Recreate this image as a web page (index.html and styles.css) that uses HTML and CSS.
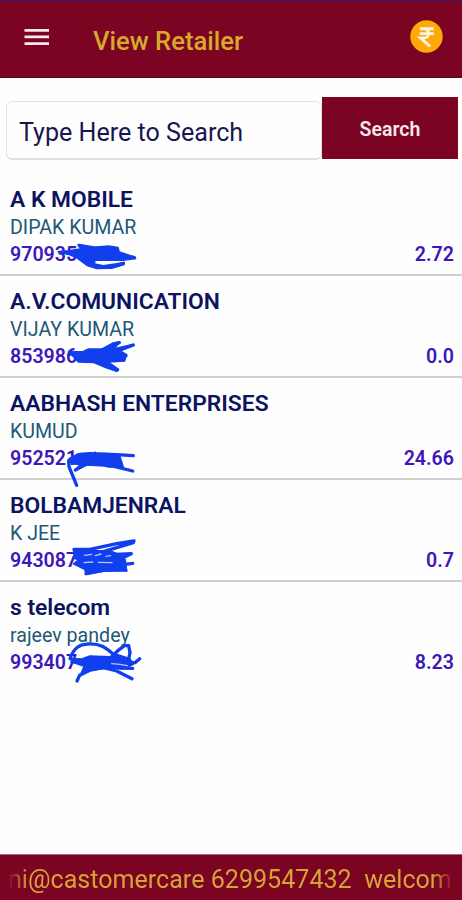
FILE: index.html
```html
<!DOCTYPE html>
<html lang="en">
<head>
    <meta charset="UTF-8">
    <meta name="viewport" content="width=device-width, initial-scale=1.0">
    <title>View Retailer</title>
    <link rel="stylesheet" href="styles.css">
</head>
<body>

<header class="topbar">
    <svg class="menu" viewBox="0 0 26 18" width="26" height="18">
        <path d="M0.5 2.3H25M0.5 8.8H25M0.5 15.6H25" stroke="#f6e9ee" stroke-width="2.8"/>
    </svg>
    <h1 class="title">View Retailer</h1>
    <svg class="coin" viewBox="0 0 34 34" width="33" height="33">
        <circle cx="17" cy="17" r="16.7" fill="#ffa908"/>
        <path d="M10 9H24.5M10 14H24.5M10 9H14C21 9 21 18.6 14 18.6H10.8L20.7 27.2" fill="none" stroke="#fff6df" stroke-width="3"/>
    </svg>
</header>

<div class="search">
    <input class="search-input" type="text" placeholder="Type Here to Search">
    <button class="search-button">Search</button>
</div>

<main class="list">
    <div class="row">
        <div class="shop">A K MOBILE</div>
        <div class="owner">DIPAK KUMAR</div>
        <div class="line"><span>970935</span><span>2.72</span></div>
        <svg class="scribble" viewBox="0 -18 720 306">
            <path class="fill" d="M174 215L205 212L242 207L234 194L275 202L325 198L354 202L358 216L404 231L407 236L370 241L285 241L284 252L310 257L345 252L373 247L372 254L335 265L290 266L262 257L230 233L200 221Z"/>
            <path d="M180 217L230 222L260 250L300 262L340 259L370 250M238 196L290 205L350 222L403 233"/>
        </svg>
    </div>
    <div class="row">
        <div class="shop">A.V.COMUNICATION</div>
        <div class="owner">VIJAY KUMAR</div>
        <div class="line"><span>853986</span><span>0.0</span></div>
        <svg class="scribble" viewBox="0 -12 720 306">
            <path class="fill" d="M206 215L250 214L264 207L306 207L340 189L360 187L342 206L398 193L401 197L362 213L380 224L374 243L325 246L356 268L350 274L315 262L282 248L235 246Z"/>
            <path d="M209 218L240 236L300 248L352 270M300 214L340 192L358 188M315 225L365 207L400 195M320 225L378 227M318 240L370 240"/>
        </svg>
    </div>
    <div class="row">
        <div class="shop">AABHASH ENTERPRISES</div>
        <div class="owner">KUMUD</div>
        <div class="line"><span>952521</span><span>24.66</span></div>
        <svg class="scribble" viewBox="0 -18 720 306">
            <path class="fill" d="M207 224L235 209L320 208L360 217L370 249L325 249L290 238L253 242L226 258L240 241L214 240Z"/>
            <path d="M230 304L207 248L206 230L240 211L270 209L350 212L400 215M214 226L250 220L285 208M226 258L260 240L330 244L398 261"/>
        </svg>
    </div>
    <div class="row">
        <div class="shop">BOLBAMJENRAL</div>
        <div class="owner">K JEE</div>
        <div class="line"><span>943087</span><span>0.7</span></div>
        <svg class="scribble" viewBox="0 -24 720 306">
            <path class="fill" d="M220 184L250 188L330 188L365 203L376 215L380 248L320 248L258 260L254 244L220 228L234 216L222 206Z"/>
            <path d="M222 184L270 184L350 167L402 159L400 164L310 191L345 199L394 197L360 213L350 232L398 226M222 208L280 225L378 247M258 257L310 247L370 246"/>
            <path class="gap" d="M254 202L275 199M286 203L303 198M318 205L332 203M252 224L278 222M295 223L336 224"/>
        </svg>
    </div>
    <div class="row">
        <div class="shop">s telecom</div>
        <div class="owner">rajeev pandey</div>
        <div class="line"><span>993407</span><span>8.23</span></div>
        <svg class="scribble" viewBox="0 -18 720 306">
            <path class="fill" d="M211 211L245 213L270 204L330 206L345 197L390 212L400 229L370 243L320 240L275 247L240 263L252 235L216 222Z"/>
            <path d="M210 212C222 178 240 169 262 168C302 165 320 181 339 198C355 220 375 226 405 224L419 212M325 219L351 190L373 173L386 173L390 194L385 218M216 222L250 218L310 215M231 279L239 262L270 246L310 239L350 249L396 272M320 233L365 240L398 241"/>
            <path class="gap" d="M335 227L360 229L382 233"/>
        </svg>
    </div>
</main>

<footer class="ticker">
    <div class="ticker-text">ni@castomercare 6299547432&nbsp; welcom</div>
</footer>

</body>
</html>
```
FILE: styles.css
```css
body {
    margin: 0;
    height: 900px;
    display: flex;
    flex-direction: column;
    overflow: hidden;
    background-color: #fefefe;
    font-family: Roboto, sans-serif;
}
.topbar {
    box-sizing: border-box;
    height: 78px;
    display: flex;
    align-items: center;
    padding: 0 19px 6px 24px;
    background-color: #7b0423;
    border-top: 2px solid #5b0f4c;
    border-bottom: 1px solid #54051a;
}
.menu {
    margin-right: 43px;
}
.title {
    flex: 1;
    margin: 9px 0 0;
    font-size: 25.6px;
    font-weight: 500;
    line-height: 32px;
    color: #d5a92a;
}
.search {
    display: flex;
    align-items: flex-start;
    padding: 19px 4px 0 6px;
    height: 77px;
}
.search-input {
    box-sizing: border-box;
    flex: 1;
    min-width: 0;
    height: 59px;
    margin-top: 4px;
    padding: 4px 12px 0;
    border: 1px solid #e0e0e0;
    border-bottom-width: 2px;
    border-radius: 6px;
    background-color: #fefefe;
    font-family: Roboto, sans-serif;
    font-size: 25.1px;
}
.search-input::placeholder {
    color: #17174f;
}
.search-button {
    width: 136px;
    height: 62px;
    padding: 2px 0 0;
    border: none;
    background-color: #7b0423;
    color: #f8e8ee;
    font-family: Roboto, sans-serif;
    font-size: 19.5px;
    font-weight: 600;
}
.list {
    flex: 1;
}
.row {
    position: relative;
    box-sizing: border-box;
    height: 102px;
    padding: 11px 8px 0 10px;
    border-bottom: 2px solid #d0d0d0;
}
.row:last-child {
    border-bottom: none;
}
.shop {
    font-size: 22.8px;
    font-weight: 600;
    line-height: 30px;
    color: #0c1462;
}
.owner {
    font-size: 19.6px;
    line-height: 26px;
    color: #215877;
}
.line {
    display: flex;
    justify-content: space-between;
    font-size: 19.6px;
    font-weight: 600;
    line-height: 27px;
    color: #3d16bd;
}
.scribble {
    position: absolute;
    left: 0;
    top: 0;
    width: 240px;
    height: 102px;
    overflow: visible;
    z-index: 1;
}
.scribble path {
    fill: none;
    stroke: #123fee;
    stroke-width: 10;
    stroke-linecap: round;
    stroke-linejoin: round;
}
.scribble .fill {
    fill: #123fee;
    stroke-width: 4;
}
.scribble .gap {
    stroke: #b9c6f8;
    stroke-width: 4;
}
.ticker {
    box-sizing: border-box;
    height: 46px;
    padding: 9px 8px 0;
    border-top: 1px solid #b5647a;
    background-color: #7b0423;
}
.ticker-text {
    overflow: hidden;
    white-space: nowrap;
    font-size: 25.1px;
    line-height: 32px;
    color: #d5a436;
    -webkit-mask-image: linear-gradient(to right, transparent, #000 20px, #000 425px, transparent);
    mask-image: linear-gradient(to right, transparent, #000 20px, #000 425px, transparent);
}
```
